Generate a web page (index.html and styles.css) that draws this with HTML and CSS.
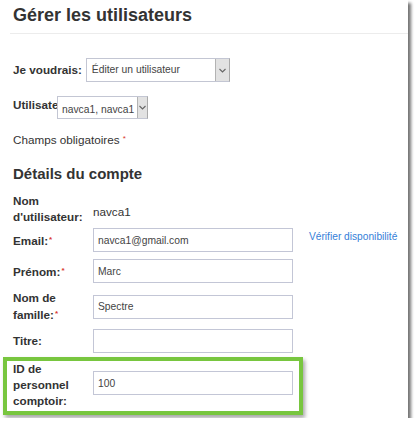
FILE: index.html
```html
<!DOCTYPE html>
<html lang="fr">
<head>
    <meta charset="UTF-8">
    <meta name="viewport" content="width=device-width, initial-scale=1.0">
    <title>Gérer les utilisateurs</title>
    <link rel="stylesheet" href="styles.css">
</head>
<body>
    <div class="page">
        <header class="page-header">
            <h1>Gérer les utilisateurs</h1>
        </header>

        <div class="content">
            <!-- choix de l'action -->
            <div class="choose-row first">
                <label class="choose-label">Je voudrais:</label>
                <div class="select select-wide">
                    <span class="select-text">Éditer un utilisateur</span>
                    <span class="select-arrow">
                        <svg width="7" height="5" viewBox="0 0 7 5"><path d="M0.5 1 L3.5 4 L6.5 1" fill="none" stroke="#666" stroke-width="1.1"/></svg>
                    </span>
                </div>
            </div>

            <div class="choose-row second">
                <label class="choose-label short">Utilisate</label>
                <div class="select select-small">
                    <span class="select-text">navca1, navca1</span>
                    <span class="select-arrow">
                        <svg width="7" height="5" viewBox="0 0 7 5"><path d="M0.5 1 L3.5 4 L6.5 1" fill="none" stroke="#666" stroke-width="1.1"/></svg>
                    </span>
                </div>
            </div>

            <p class="required-note">Champs obligatoires <span class="req">*</span></p>

            <h2 class="section-title">Détails du compte</h2>

            <!-- formulaire du compte -->
            <div class="field username-row">
                <label class="field-label">Nom d'utilisateur:</label>
                <span class="field-value">navca1</span>
            </div>

            <div class="field email-row">
                <label class="field-label">Email:<span class="req">*</span></label>
                <input class="field-input" type="text" value="navca1@gmail.com">
                <a href="#" class="check-link">Vérifier disponibilité</a>
            </div>

            <div class="field">
                <label class="field-label">Prénom:<span class="req">*</span></label>
                <input class="field-input" type="text" value="Marc">
            </div>

            <div class="field">
                <label class="field-label">Nom de famille:<span class="req">*</span></label>
                <input class="field-input" type="text" value="Spectre">
            </div>

            <div class="field title-row">
                <label class="field-label">Titre:</label>
                <input class="field-input" type="text" value="">
            </div>

            <div class="highlight">
                <div class="field id-row">
                    <label class="field-label">ID de personnel comptoir:</label>
                    <input class="field-input" type="text" value="100">
                </div>
            </div>
        </div>
    </div>
</body>
</html>
```

FILE: styles.css
```css
* {
    margin: 0;
    padding: 0;
    box-sizing: border-box;
}

body {
    font-family: 'Liberation Sans', Arial, sans-serif;
    background-color: #fff;
    color: #333;
}

.page {
    width: 408px;
    height: 418px;
    background-color: #fff;
    box-shadow: 3px 3px 3px rgba(0, 0, 0, 0.55);
    overflow: hidden;
}

.page-header {
    margin-left: 10px;
    padding: 5px 0 7px 3px;
    border-bottom: 1px solid #ececec;
}

.page-header h1 {
    font-size: 18px;
    line-height: 21px;
    font-weight: 700;
    color: #333;
}

.content {
    padding-left: 13px;
}

.choose-row {
    display: flex;
    align-items: center;
}

.choose-row.first {
    margin-top: 24px;
}

.choose-row.second {
    margin-top: 14px;
}

.choose-label {
    font-size: 11.7px;
    font-weight: 700;
    line-height: 16px;
    margin-right: 4px;
}

.choose-label.short {
    width: 44px;
    margin-right: 0;
    margin-bottom: 6px;
    white-space: nowrap;
}

.select {
    display: flex;
    align-items: stretch;
    border: 1px solid #c3c6d3;
    border-right-color: #a9a9a9;
    background-color: #fff;
}

.select-wide {
    width: 144px;
    height: 24px;
}

.select-small {
    width: 91px;
    height: 23px;
}

.select-text {
    flex: 1;
    font-size: 10.3px;
    color: #444;
    line-height: 22px;
    padding-left: 5px;
    white-space: nowrap;
}

.select-small .select-text {
    padding-left: 4px;
    padding-top: 2px;
}

.select-arrow {
    width: 14px;
    display: flex;
    align-items: center;
    justify-content: center;
    background-color: #e2e2e2;
    border-left: 1px solid #b3b3b3;
}

.select-small .select-arrow {
    width: 10px;
}

.required-note {
    margin-top: 12px;
    font-size: 11.7px;
    line-height: 16px;
}

.req {
    color: #d9382f;
    font-size: 8px;
    vertical-align: 3px;
    margin-left: 1px;
}

.required-note .req {
    margin-left: 0;
}

.section-title {
    margin-top: 17px;
    font-size: 15px;
    line-height: 18px;
    font-weight: 700;
    color: #333;
}

.field {
    display: flex;
    align-items: center;
    margin-top: 7px;
}

.field-label {
    width: 80px;
    flex-shrink: 0;
    font-size: 11.7px;
    font-weight: 700;
    line-height: 16px;
}

.field-value {
    font-size: 11.7px;
    color: #333;
    padding-top: 5px;
}

.username-row {
    margin-top: 10px;
}

.email-row {
    margin-top: 3px;
}

.title-row {
    margin-top: 6px;
}

.field-input {
    width: 200px;
    height: 24px;
    border: 1px solid #c3c6d6;
    padding: 0 4px;
    font-family: 'Liberation Sans', Arial, sans-serif;
    font-size: 10.3px;
    color: #444;
    background-color: #fff;
    outline: none;
}

.check-link {
    margin-left: 16px;
    margin-bottom: 8px;
    font-size: 10.2px;
    color: #3580d8;
    text-decoration: none;
}

.highlight {
    width: fit-content;
    margin-top: 4px;
    margin-left: -10px;
    padding: 0 6px 2px 6px;
    border: 4px solid #78c63f;
    box-shadow: 2px 3px 4px rgba(0, 0, 0, 0.35);
}

.highlight .field {
    margin-top: 0;
}

.id-row .field-input {
    margin-bottom: 4px;
}
```
